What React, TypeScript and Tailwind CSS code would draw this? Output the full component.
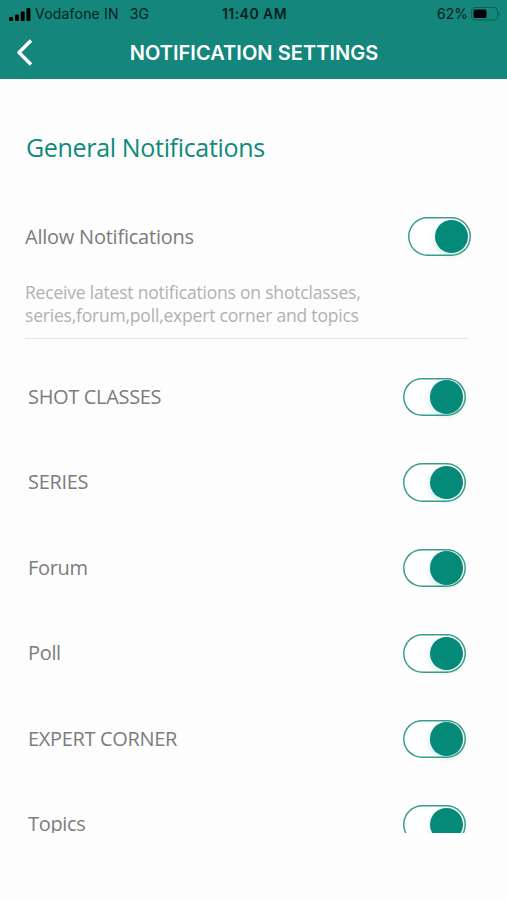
import { useState } from "react";
import clsx from "clsx";

const TOPICS = ["SHOT CLASSES", "SERIES", "Forum", "Poll", "EXPERT CORNER", "Topics"];

interface ToggleProps {
  label: string;
  checked: boolean;
  onChange: () => void;
}

const Toggle = ({ label, checked, onChange }: ToggleProps) => (
  <button
    type="button"
    role="switch"
    aria-label={label}
    aria-checked={checked}
    onClick={onChange}
    className={clsx(
      "flex h-[38.5px] w-[62.5px] shrink-0 items-center rounded-full bg-white px-[2.5px] shadow-[inset_0_0_0_1.5px_#3a9c8e]",
      checked ? "justify-end" : "justify-start"
    )}
  >
    <span className="size-[33.5px] rounded-full bg-[#058a7a] shadow-[-1px_3px_5px_rgba(5,138,122,0.15)]" />
  </button>
);

const StatusBar = () => (
  <div className="grid h-7 grid-cols-[1fr_auto_1fr] items-center pl-[9px] pr-[7px] text-[14px] text-[#05211e]">
    <div className="flex items-center">
      <svg width="22" height="13" viewBox="0 0 22 13" fill="#000">
        <rect x="0" y="9" width="4" height="4" rx="1" />
        <rect x="6" y="6.5" width="4" height="6.5" rx="1" />
        <rect x="11.7" y="3.5" width="4" height="9.5" rx="1" />
        <rect x="17.4" y="0" width="4" height="13" rx="1" />
      </svg>
      <span className="mb-0.5 ml-1 tracking-[0.2px]">Vodafone IN</span>
      <span className="mb-0.5 ml-[11px]">3G</span>
    </div>
    <span className="mb-0.5 font-semibold tracking-[0.45px]">11:40 AM</span>
    <div className="flex items-center justify-end">
      <span className="mb-0.5">62%</span>
      <svg className="ml-[3px]" width="29" height="14" viewBox="0 0 29 14">
        <rect x="0.5" y="0.5" width="26" height="12.5" rx="3.5" fill="none" stroke="#0b5f56" />
        <rect x="2.5" y="2.5" width="13" height="8.5" rx="1.5" fill="#000" />
        <path d="M27.5 4.5c1.6.6 1.6 4 0 4.6z" fill="#0b5f56" />
      </svg>
    </div>
  </div>
);

const App = () => {
  const [allowAll, setAllowAll] = useState(true);
  const [enabled, setEnabled] = useState<string[]>(TOPICS);

  const toggleTopic = (topic: string) => {
    setEnabled(prev =>
      prev.includes(topic) ? prev.filter(item => item !== topic) : [...prev, topic]
    );
  };

  return (
    <div className="h-[900px] w-[507px] overflow-hidden bg-[#fdfdfd] font-['Open_Sans',sans-serif] text-[#7c7c7c]">
      <header className="h-[79px] bg-[#14867b] font-['Inter',sans-serif]">
        <StatusBar />
        <div className="grid h-12 grid-cols-[60px_1fr_60px] items-center pt-px">
          <button type="button" aria-label="Back" className="pl-4">
            <svg width="17" height="27" viewBox="0 0 17 27" fill="none" stroke="#fff" strokeWidth="3.5">
              <path d="M15 1.5 3 13.5l12 12" strokeLinejoin="round" />
            </svg>
          </button>
          <h1 className="pl-px text-center text-[20px] font-semibold tracking-[0.05px] whitespace-nowrap text-white">
            NOTIFICATION SETTINGS
          </h1>
        </div>
      </header>

      <main className="h-[754px] overflow-hidden">
        <section className="ml-[25px] w-[443px] border-b border-[#e4e4e4] pt-[50px]">
          <h2 className="pl-px text-[25px] leading-9 tracking-[-0.33px] text-[#0f8a7b]">General Notifications</h2>
          <div className="-mr-[2.5px] mt-[52px] flex items-center justify-between">
            <span className="pt-0.5 text-[20px] tracking-[-0.23px]">Allow Notifications</span>
            <Toggle label="Allow Notifications" checked={allowAll} onChange={() => setAllowAll(!allowAll)} />
          </div>
          <p className="mt-[25.5px] pb-[11px] text-[17.5px] leading-[23px] tracking-[-0.2px] text-[#b1b1b1]">
            Receive latest notifications on shotclasses,
            <br />
            series,forum,poll,expert corner and topics
          </p>
        </section>

        <ul className="mt-[15px] pl-7 pr-[41.5px]">
          {TOPICS.map(topic => (
            <li key={topic} className="flex h-[85.5px] items-center justify-between text-[20px] tracking-[-0.33px]">
              <span>{topic}</span>
              <Toggle label={topic} checked={enabled.includes(topic)} onChange={() => toggleTopic(topic)} />
            </li>
          ))}
        </ul>
      </main>
    </div>
  );
};

export default App;
